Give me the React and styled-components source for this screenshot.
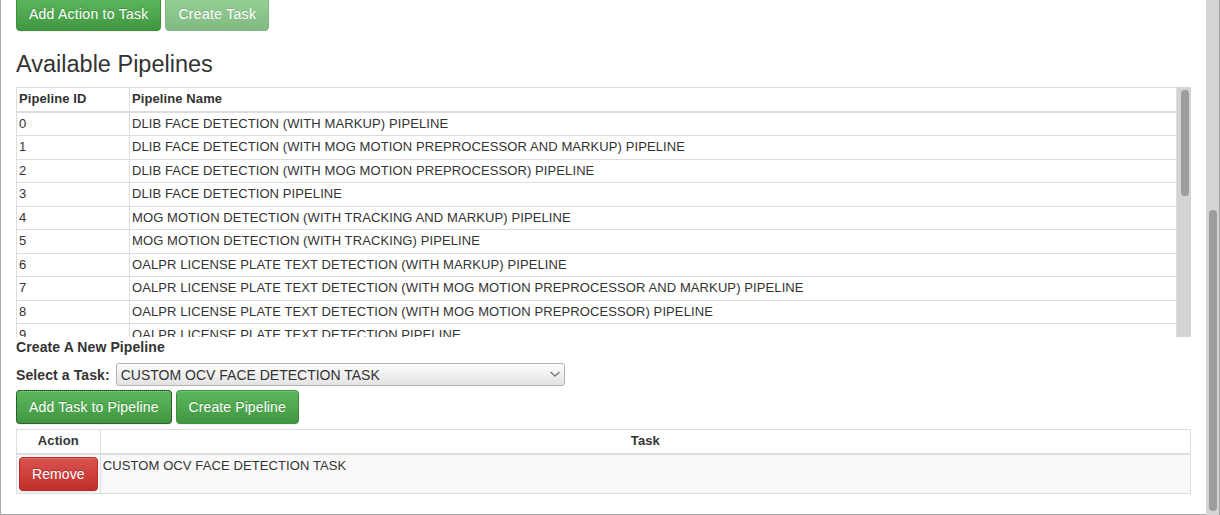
import React, { useState } from "react";
import styled, { createGlobalStyle, css } from "styled-components";

const GlobalStyle = createGlobalStyle`
  html, body {
    margin: 0;
    padding: 0;
    background: #ffffff;
  }
  body {
    font-family: "Liberation Sans", Arial, Helvetica, sans-serif;
    font-size: 14px;
    line-height: 1.42857;
    color: #333333;
  }
  * { box-sizing: border-box; }
`;

const Page = styled.div`
  display: flex;
  width: 1220px;
  height: 515px;
  overflow: hidden;
`;

const Panel = styled.main`
  flex: 1;
  height: 515px;
  display: flex;
  flex-direction: column;
  justify-content: flex-end;
  overflow: hidden;
  padding: 0 15px;
  border-left: 1px solid #a9a9a9;
  border-bottom: 1px solid #a9a9a9;
`;

const ScrollTrack = styled.div`
  width: 14px;
  flex: none;
  background: #d4d4d4;
  display: flex;
  flex-direction: column;
  ${(p) =>
    p.$edge &&
    css`
      border-right: 1px solid #a3a3a3;
    `}
`;

const ScrollThumb = styled.div`
  margin-top: ${(p) => p.$top}px;
  margin-left: ${(p) => p.$left ?? 3}px;
  width: 8px;
  height: ${(p) => p.$length}px;
  border-radius: 4px;
  background: #9d9d9d;
`;

const ButtonRow = styled.div`
  display: flex;
  gap: ${(p) => p.$gap ?? 4}px;
  flex: none;
  margin-bottom: ${(p) => p.$mb ?? 0}px;
`;

const variants = {
  success: css`
    background-color: #419641;
    background-image: linear-gradient(to bottom, #5cb85c 0%, #419641 100%);
    border-color: #3e8f3e;
  `,
  danger: css`
    background-color: #c12e2a;
    background-image: linear-gradient(to bottom, #d9534f 0%, #c12e2a 100%);
    border-color: #b92c28;
  `,
};

const Button = styled.button`
  display: inline-block;
  flex: none;
  height: 34px;
  padding: 6px 12px;
  font-family: "Liberation Sans", Arial, Helvetica, sans-serif;
  font-size: 14px;
  line-height: 20px;
  letter-spacing: ${(p) => p.$spacing ?? 0.2}px;
  color: #ffffff;
  text-shadow: 0 -1px 0 rgba(0, 0, 0, 0.2);
  border: 1px solid transparent;
  border-radius: 4px;
  box-shadow: inset 0 1px 0 rgba(255, 255, 255, 0.15), 0 1px 1px rgba(0, 0, 0, 0.075);
  cursor: pointer;
  white-space: nowrap;
  ${(p) => variants[p.$variant || "success"]}
  ${(p) =>
    p.disabled &&
    css`
      opacity: 0.65;
      box-shadow: none;
      cursor: not-allowed;
    `}
  ${(p) =>
    p.$focused &&
    css`
      outline: 1px dotted #1d2e1d;
      outline-offset: -1px;
    `}
`;

const Heading = styled.h3`
  flex: none;
  margin: 20px 0 10px;
  font-size: 23.5px;
  font-weight: 500;
  line-height: 26.4px;
  color: #333333;
`;

const TableFrame = styled.div`
  flex: none;
  display: flex;
  height: 250px;
  overflow: hidden;
`;

const TableViewport = styled.div`
  flex: 1;
  overflow: hidden;
`;

const Table = styled.table`
  width: 100%;
  border-collapse: collapse;
  border-spacing: 0;
  font-size: 13px;
  letter-spacing: 0.1px;
  border: 1px solid #dddddd;
  margin-bottom: ${(p) => p.$mb ?? 0}px;
  flex: none;
`;

const Th = styled.th`
  padding: 2px;
  line-height: 18.57px;
  font-weight: bold;
  text-align: ${(p) => p.$align || "left"};
  vertical-align: bottom;
  border: 1px solid #dddddd;
  border-bottom-width: 2px;
`;

const Td = styled.td`
  padding: 2px;
  line-height: ${(p) => (p.$tight ? "18.43px" : "18.57px")};
  vertical-align: top;
  border: 1px solid #dddddd;
`;

const Tr = styled.tr`
  background: ${(p) => (p.$striped ? "#f9f9f9" : "transparent")};
`;

const FieldLabel = styled.label`
  display: block;
  flex: none;
  font-weight: bold;
  font-size: 14px;
  line-height: 20px;
  letter-spacing: 0.1px;
  margin-bottom: 6px;
`;

const SelectRow = styled.div`
  display: flex;
  align-items: center;
  gap: 6px;
  flex: none;
  margin-bottom: 4px;
`;

const InlineLabel = styled.label`
  font-weight: bold;
  font-size: 14px;
  line-height: 20px;
  letter-spacing: 0.1px;
`;

const SelectWrap = styled.div`
  position: relative;
  width: 449px;
  height: 23px;
`;

const Select = styled.select`
  appearance: none;
  -webkit-appearance: none;
  width: 100%;
  height: 23px;
  padding: 0 24px 0 4px;
  font-family: "Liberation Sans", Arial, Helvetica, sans-serif;
  font-size: 14px;
  color: #333333;
  border: 1px solid #b3b3b3;
  border-radius: 3px;
  background: linear-gradient(to bottom, #fdfdfd 0%, #f0f0f0 50%, #e2e2e2 100%);
`;

const Chevron = styled.svg`
  position: absolute;
  right: 5px;
  top: 8px;
  width: 10px;
  height: 7px;
  pointer-events: none;
`;

const pipelines = [
  "DLIB FACE DETECTION (WITH MARKUP) PIPELINE",
  "DLIB FACE DETECTION (WITH MOG MOTION PREPROCESSOR AND MARKUP) PIPELINE",
  "DLIB FACE DETECTION (WITH MOG MOTION PREPROCESSOR) PIPELINE",
  "DLIB FACE DETECTION PIPELINE",
  "MOG MOTION DETECTION (WITH TRACKING AND MARKUP) PIPELINE",
  "MOG MOTION DETECTION (WITH TRACKING) PIPELINE",
  "OALPR LICENSE PLATE TEXT DETECTION (WITH MARKUP) PIPELINE",
  "OALPR LICENSE PLATE TEXT DETECTION (WITH MOG MOTION PREPROCESSOR AND MARKUP) PIPELINE",
  "OALPR LICENSE PLATE TEXT DETECTION (WITH MOG MOTION PREPROCESSOR) PIPELINE",
  "OALPR LICENSE PLATE TEXT DETECTION PIPELINE",
  "OCV FACE DETECTION (WITH MARKUP) PIPELINE",
  "OCV FACE DETECTION PIPELINE",
];

const tasks = [
  "CUSTOM OCV FACE DETECTION TASK",
  "OCV FACE DETECTION TASK",
  "DLIB FACE DETECTION TASK",
  "MOG MOTION DETECTION TASK",
];

export default function App() {
  const [task, setTask] = useState(tasks[0]);
  const [added, setAdded] = useState([tasks[0]]);

  return (
    <>
      <GlobalStyle />
      <Page>
        <Panel>
          <ButtonRow>
            <Button $variant="success" $spacing={0.25}>Add Action to Task</Button>
            <Button $variant="success" $spacing={0.3} disabled>
              Create Task
            </Button>
          </ButtonRow>

          <Heading>Available Pipelines</Heading>

          <TableFrame>
            <TableViewport>
              <Table>
                <colgroup>
                  <col style={{ width: 113 }} />
                  <col />
                </colgroup>
                <thead>
                  <tr>
                    <Th>Pipeline ID</Th>
                    <Th>Pipeline Name</Th>
                  </tr>
                </thead>
                <tbody>
                  {pipelines.map((name, i) => (
                    <tr key={name}>
                      <Td $tight>{i}</Td>
                      <Td $tight>{name}</Td>
                    </tr>
                  ))}
                </tbody>
              </Table>
            </TableViewport>
            <ScrollTrack>
              <ScrollThumb $top={3} $left={4} $length={106} />
            </ScrollTrack>
          </TableFrame>

          <FieldLabel>Create A New Pipeline</FieldLabel>

          <SelectRow>
            <InlineLabel htmlFor="task-select">Select a Task:</InlineLabel>
            <SelectWrap>
              <Select
                id="task-select"
                value={task}
                onChange={(e) => setTask(e.target.value)}
              >
                {tasks.map((t) => (
                  <option key={t} value={t}>
                    {t}
                  </option>
                ))}
              </Select>
              <Chevron viewBox="0 0 10 7">
                <path
                  d="M1 1.5 L5 5 L9 1.5"
                  fill="none"
                  stroke="#7a7a7a"
                  strokeWidth="1.6"
                  strokeLinecap="round"
                  strokeLinejoin="round"
                />
              </Chevron>
            </SelectWrap>
          </SelectRow>

          <ButtonRow $mb={5}>
            <Button
              $variant="success"
              $spacing={0.15}
              $focused
              onClick={() => setAdded((a) => [...a, task])}
            >
              Add Task to Pipeline
            </Button>
            <Button $variant="success" $spacing={0.1}>Create Pipeline</Button>
          </ButtonRow>

          <Table $mb={20}>
            <colgroup>
              <col style={{ width: 83 }} />
              <col />
            </colgroup>
            <thead>
              <tr>
                <Th $align="center">Action</Th>
                <Th $align="center">Task</Th>
              </tr>
            </thead>
            <tbody>
              {added.slice(0, 1).map((t, i) => (
                <Tr key={i} $striped={i % 2 === 0}>
                  <Td>
                    <Button
                      $variant="danger"
                      $spacing={0.1}
                      onClick={() => setAdded((a) => a.filter((_, j) => j !== i))}
                    >
                      Remove
                    </Button>
                  </Td>
                  <Td>{t}</Td>
                </Tr>
              ))}
            </tbody>
          </Table>
        </Panel>
        <ScrollTrack $edge>
          <ScrollThumb $top={210} $left={3} $length={301} />
        </ScrollTrack>
      </Page>
    </>
  );
}
